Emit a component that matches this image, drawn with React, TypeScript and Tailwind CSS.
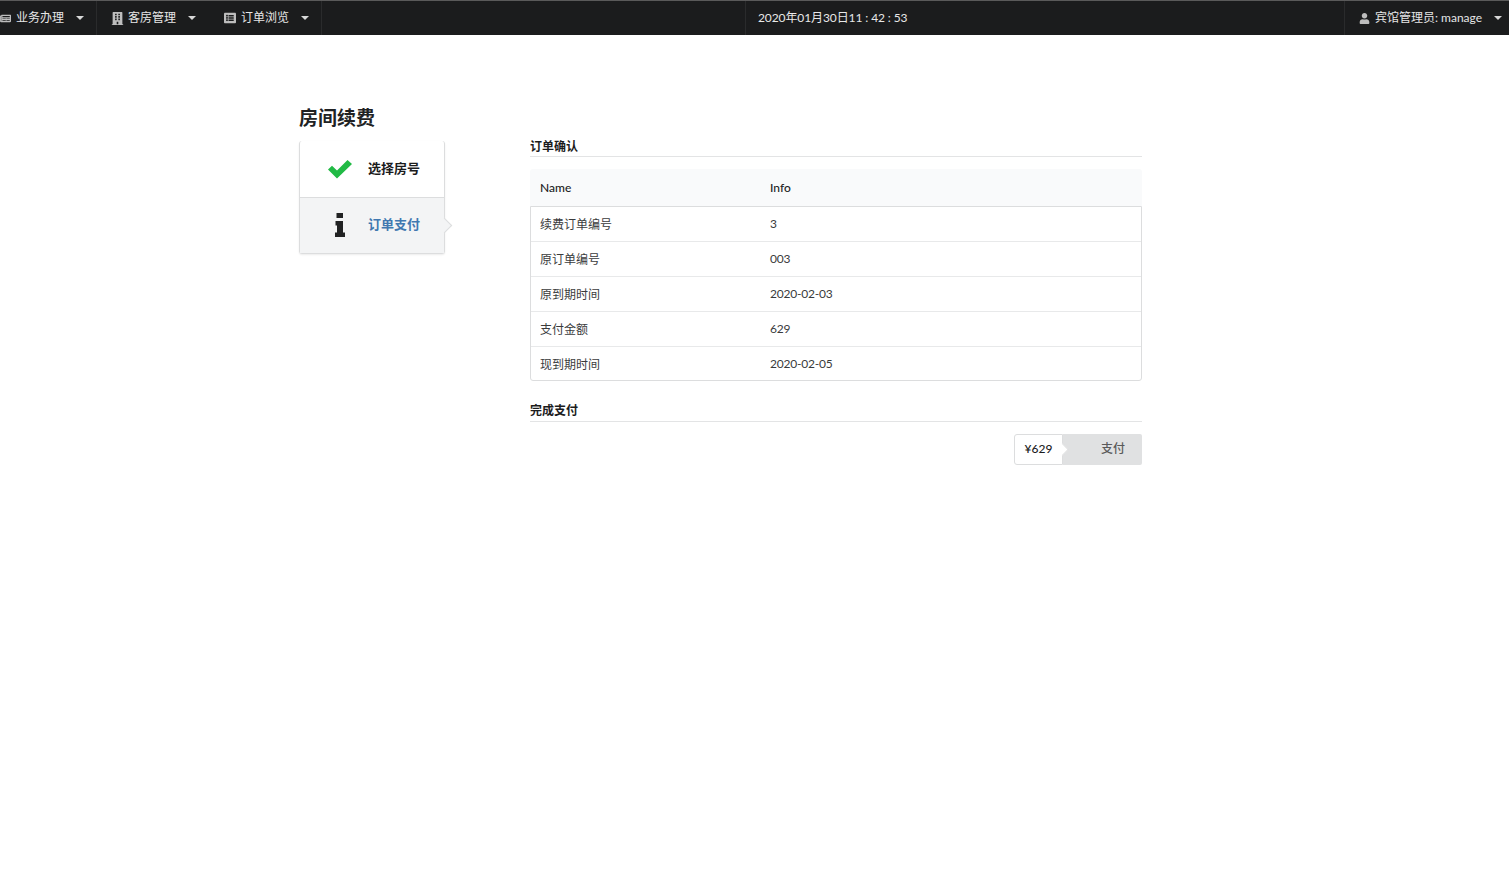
import { FaBuilding, FaListAlt, FaNewspaper, FaUser } from "react-icons/fa";
import type { ReactNode } from "react";

const font = "font-['Lato','Noto_Sans_CJK_SC','Liberation_Sans',sans-serif]";

const rows = [
  ["续费订单编号", "3"],
  ["原订单编号", "003"],
  ["原到期时间", "2020-02-03"],
  ["支付金额", "629"],
  ["现到期时间", "2020-02-05"],
];

function Caret() {
  return <span className="ml-[12px] h-0 w-0 border-x-[4.5px] border-t-[4.5px] border-x-transparent border-t-[#d8d8d8]" />;
}

function MenuItem({ icon, label, className }: { icon: ReactNode; label: string; className: string }) {
  return (
    <div className={`flex h-full items-center ${className}`}>
      {icon}
      <span className="ml-[5px]">{label}</span>
      <Caret />
    </div>
  );
}

function SectionHeader({ children, className }: { children: ReactNode; className: string }) {
  return <div className={`border-b border-[#e3e4e5] text-[12px] leading-[14px] font-bold text-[#1b1c1d] ${className}`}>{children}</div>;
}

export default function App() {
  return (
    <div className={`min-h-[870px] bg-white text-[12px] ${font}`}>
      <nav className="flex h-[35px] items-stretch border-t border-[#5a5a5a] bg-[#1b1c1d] text-[12px] text-[#e6e6e6]">
        <MenuItem
          className="w-[97px] shrink-0 border-r border-[#2a2b2c]"
          icon={<FaNewspaper size={11} className="text-[#bdbdbd]" />}
          label="业务办理"
        />
        <MenuItem
          className="w-[113px] shrink-0 pl-[14px]"
          icon={<FaBuilding size={13} className="-mr-[1px] text-[#bdbdbd]" />}
          label="客房管理"
        />
        <MenuItem
          className="w-[112px] shrink-0 border-r border-[#2a2b2c] pl-[14px]"
          icon={<FaListAlt size={12} className="text-[#bdbdbd]" />}
          label="订单浏览"
        />
        <div className="ml-[423px] flex w-[600px] items-center border-x border-[#2a2b2c] pl-[12px] tracking-[-0.1px] text-[#e8e8e8]">
          2020年01月30日11 : 42 : 53
        </div>
        <div className="flex flex-1 items-center pl-[14px]">
          <FaUser size={11} className="text-[#bdbdbd]" />
          <span className="ml-[5px]">宾馆管理员: manage</span>
          <Caret />
        </div>
      </nav>

      <main className="flex pt-[69px] pl-[299px]">
        <div className="w-[231px] shrink-0">
          <h1 className="h-[37px] pt-[1px] text-[19px] leading-[26px] font-bold text-[#212223]">房间续费</h1>
          <div className="w-[146px] rounded-[3px] border border-t-0 border-[#dcddde] shadow-[0_1px_2px_rgba(0,0,0,0.08)]">
            <div className="flex h-[57px] items-center border-b border-[#dcddde] pl-[27px]">
              <svg width="26" height="20" viewBox="0 0 26 20" className="shrink-0">
                <path d="M1 10.5 L5 6.8 L10 11.5 L20.5 1 L25 5 L10 19.5 Z" fill="#21ba45" />
              </svg>
              <span className="ml-[15px] text-[13px] font-bold text-[#1b1c1d]">选择房号</span>
            </div>
            <div className="relative flex h-[55px] items-center bg-[#f3f4f5] pl-[27px]">
              <svg width="26" height="24" viewBox="0 0 26 24" className="mb-[2px] shrink-0">
                <path d="M9.5 0H16V5H9.5ZM8.5 8H16V19.5H18V24H8V19.5H10V12.5H8.5Z" fill="#212223" />
              </svg>
              <span className="mb-[2px] ml-[15px] text-[13px] font-bold text-[#4078b0]">订单支付</span>
              <span className="absolute top-[22px] -right-[6px] h-[11px] w-[11px] rotate-45 border-t border-r border-[#dcddde] bg-[#f3f4f5]" />
            </div>
          </div>
        </div>

        <div className="w-[612px] pt-[36px]">
          <SectionHeader className="h-[17px]">订单确认</SectionHeader>
          <div className="mt-[12px] flex h-[37px] items-center rounded-t-[3px] bg-[#f9fafb] font-medium text-[#222324]">
            <div className="w-[240px] pl-[10px]">Name</div>
            <div>Info</div>
          </div>
          <div className="rounded-b-[3px] border border-[#dcddde] text-[#3a3b3c]">
            {rows.map(([name, info], i) => (
              <div
                key={name}
                className={`flex items-center ${i > 0 ? "border-t border-[#e8e9ea]" : ""} ${i === 0 || i === rows.length - 1 ? "h-[34px]" : "h-[35px]"}`}
              >
                <div className={`w-[239px] pl-[9px] ${i === rows.length - 1 ? "pt-[2px]" : "pt-[1px]"}`}>{name}</div>
                <div className="tracking-[-0.2px]">{info}</div>
              </div>
            ))}
          </div>
          <div className="mt-[23px]">
            <SectionHeader className="h-[18px]">完成支付</SectionHeader>
          </div>
          <div className="mt-[12px] flex justify-end">
            <div className="relative z-10 flex h-[31px] w-[49px] items-center justify-center rounded-l-[3px] border border-[#dcddde] bg-white pb-[1px] font-medium text-[#1b1c1d]">
              ¥629
              <span className="absolute top-[10px] -right-[5px] h-[9px] w-[9px] rotate-45 border-t border-r border-[#dcddde] bg-white" />
            </div>
            <div className="flex h-[31px] w-[79px] items-center justify-end rounded-r-[2px] bg-[#e0e1e2] pr-[17px] pb-[1px] font-medium text-[#5a5a5a]">
              支付
            </div>
          </div>
        </div>
      </main>
    </div>
  );
}
